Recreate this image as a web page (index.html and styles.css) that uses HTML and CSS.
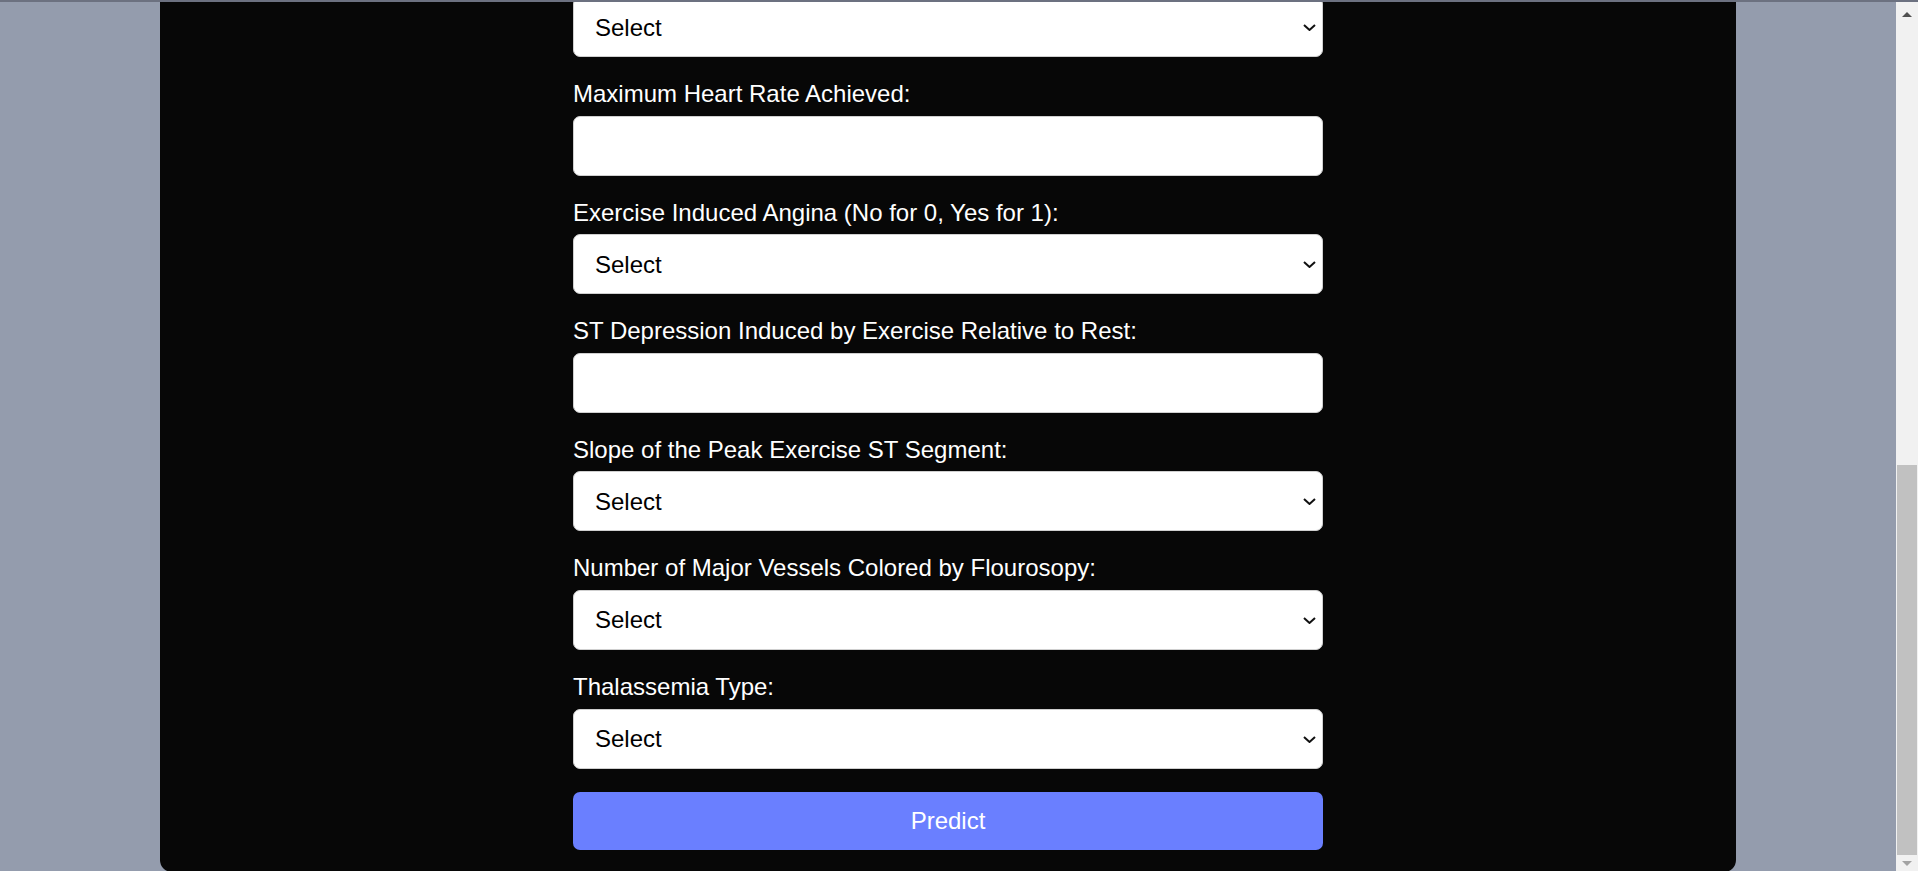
FILE: index.html
```html
<!DOCTYPE html>
<html lang="en">
<head>
<meta charset="utf-8">
<title>Heart Disease Prediction</title>
<link rel="stylesheet" href="styles.css">
</head>
<body>
<div class="viewport">
  <main class="panel">
    <form class="form">
      <div class="select-wrap">
        <select class="control select"><option>Select</option></select>
        <svg class="chev" width="13" height="7" viewBox="0 0 13 7"><polyline points="1,1 6.5,6 12,1" fill="none" stroke="#111" stroke-width="2"/></svg>
      </div>
      <div class="group">
        <label class="label">Maximum Heart Rate Achieved:</label>
        <input class="control" type="text">
      </div>
      <div class="group">
        <label class="label">Exercise Induced Angina (No for 0, Yes for 1):</label>
        <div class="select-wrap">
          <select class="control select"><option>Select</option></select>
          <svg class="chev" width="13" height="7" viewBox="0 0 13 7"><polyline points="1,1 6.5,6 12,1" fill="none" stroke="#111" stroke-width="2"/></svg>
        </div>
      </div>
      <div class="group">
        <label class="label">ST Depression Induced by Exercise Relative to Rest:</label>
        <input class="control" type="text">
      </div>
      <div class="group">
        <label class="label">Slope of the Peak Exercise ST Segment:</label>
        <div class="select-wrap">
          <select class="control select"><option>Select</option></select>
          <svg class="chev" width="13" height="7" viewBox="0 0 13 7"><polyline points="1,1 6.5,6 12,1" fill="none" stroke="#111" stroke-width="2"/></svg>
        </div>
      </div>
      <div class="group">
        <label class="label">Number of Major Vessels Colored by Flourosopy:</label>
        <div class="select-wrap">
          <select class="control select"><option>Select</option></select>
          <svg class="chev" width="13" height="7" viewBox="0 0 13 7"><polyline points="1,1 6.5,6 12,1" fill="none" stroke="#111" stroke-width="2"/></svg>
        </div>
      </div>
      <div class="group">
        <label class="label">Thalassemia Type:</label>
        <div class="select-wrap">
          <select class="control select"><option>Select</option></select>
          <svg class="chev" width="13" height="7" viewBox="0 0 13 7"><polyline points="1,1 6.5,6 12,1" fill="none" stroke="#111" stroke-width="2"/></svg>
        </div>
      </div>
      <button class="btn" type="button">Predict</button>
    </form>
  </main>
</div>
<div class="scrollbar">
  <div class="sb-btn sb-up"><span class="tri-up"></span></div>
  <div class="sb-track"><div class="sb-thumb"></div></div>
  <div class="sb-btn sb-down"><span class="tri-down"></span></div>
</div>
</body>
</html>
```

FILE: styles.css
```css
* { box-sizing: border-box; }

html, body {
  margin: 0;
  height: 100%;
}

body {
  display: flex;
  height: 871px;
  overflow: hidden;
  border-top: 2px solid #6c7180;
  background: #949cad;
  font-family: "Liberation Sans", Arial, sans-serif;
}

.viewport {
  flex: 1;
  overflow: hidden;
  background: #949cad;
}

.panel {
  width: 1576px;
  margin: 0 auto;
  background: #070707;
  border-radius: 0 0 12px 12px;
  padding-bottom: 22px;
}

.form {
  width: 750px;
  margin: -5px auto 0;
  display: flex;
  flex-direction: column;
  gap: 23px;
}

.group {
  display: flex;
  flex-direction: column;
  gap: 8px;
}

.label {
  display: block;
  color: #ffffff;
  font-size: 24px;
  line-height: 27.6px;
  height: 27.6px;
}

.control {
  display: block;
  width: 100%;
  height: 60px;
  margin: 0;
  border: 1px solid #cfcfcf;
  border-radius: 7px;
  background: #ffffff;
  font-family: "Liberation Sans", Arial, sans-serif;
  font-size: 24px;
  color: #000;
  padding: 0 21px;
  outline: none;
}

.select {
  appearance: none;
  -webkit-appearance: none;
}

.select-wrap {
  position: relative;
}

.chev {
  position: absolute;
  right: 7px;
  top: 27px;
  display: block;
}

.btn {
  display: block;
  width: 100%;
  height: 58px;
  border: none;
  border-radius: 7px;
  background: #6a7fff;
  color: #ffffff;
  font-family: "Liberation Sans", Arial, sans-serif;
  font-size: 24px;
}

.scrollbar {
  width: 22px;
  flex: none;
  background: #f1f1f1;
  display: flex;
  flex-direction: column;
}

.sb-btn {
  display: flex;
  justify-content: center;
}

.sb-up {
  height: 21px;
  padding-top: 10px;
}

.sb-down {
  height: 16px;
  padding-top: 6px;
}

.tri-up {
  width: 0;
  height: 0;
  border-left: 5px solid transparent;
  border-right: 5px solid transparent;
  border-bottom: 5px solid #505050;
}

.tri-down {
  width: 0;
  height: 0;
  border-left: 5px solid transparent;
  border-right: 5px solid transparent;
  border-top: 5px solid #a3a3a3;
}

.sb-track {
  flex: 1;
  padding: 442px 1px 0 1px;
}

.sb-thumb {
  height: 390px;
  background: #c1c1c1;
}
```
